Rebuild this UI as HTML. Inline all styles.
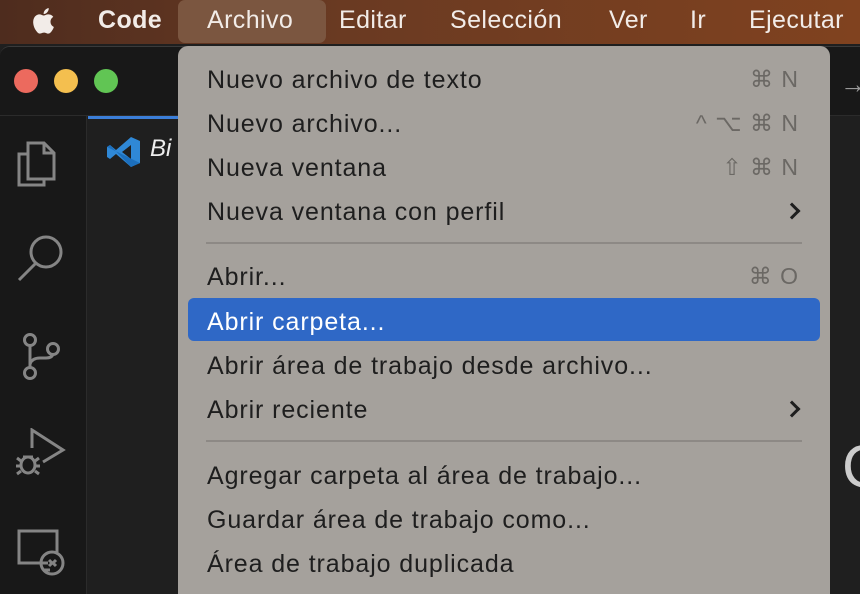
<!DOCTYPE html><html><head><meta charset="utf-8"><style>
*{margin:0;padding:0;box-sizing:border-box}
html,body{width:860px;height:594px;overflow:hidden}
body{position:relative;background:#1f1f1f;font-family:"Liberation Sans",sans-serif}
.mb{position:absolute;left:0;top:0;width:860px;height:44px;background:linear-gradient(90deg,#4e2c1e,#6a3a22 40%,#80421f);color:#f2ece8;font-size:25px;letter-spacing:0.4px}
.mb span{position:absolute;top:6px}
.win{position:absolute;left:0;top:46px;width:860px;height:548px;background:#1f1f1f;border-radius:10px 0 0 0;border-top:1px solid #3a3a3a;overflow:hidden}
.title{position:absolute;left:0;top:0;width:860px;height:69px;background:#181818;border-bottom:1px solid #2b2b2b}
.act{position:absolute;left:0;top:69px;width:87px;height:480px;background:#181818;border-right:1px solid #2b2b2b}
.dot{position:absolute;top:22px;width:24px;height:24px;border-radius:50%}
.menu{position:absolute;left:178px;top:46px;width:652px;height:560px;background:#a5a19c;border-radius:10px;color:#1e1e1e;font-size:25px;letter-spacing:0.9px}
.it{position:absolute;left:29px;line-height:30px;white-space:nowrap}
.sc{position:absolute;right:31px;color:#6b6864;line-height:30px;font-size:23px;letter-spacing:1px}
.sep{position:absolute;left:28px;width:596px;height:2px;background:#8d8985}
.hl{position:absolute;left:10px;top:252px;width:632px;height:43px;background:#2f68c6;border-radius:6px}
.arr{position:absolute;right:32px;width:12px;height:12px;border-right:3px solid #1e1e1e;border-top:3px solid #1e1e1e;transform:rotate(45deg)}
svg{position:absolute}
</style></head><body>
<div class="mb">
<svg style="left:30px;top:6px" width="30" height="30" viewBox="0 0 24 24"><path fill="#f2ece8" d="M16.4 12.6c0-2.6 2.1-3.8 2.2-3.9-1.2-1.8-3.1-2-3.7-2-1.6-.2-3.1.9-3.9.9-.8 0-2-.9-3.4-.9-1.7 0-3.3 1-4.2 2.6-1.8 3.1-.5 7.7 1.3 10.2.9 1.2 1.9 2.6 3.2 2.6 1.3-.1 1.8-.8 3.3-.8 1.6 0 2 .8 3.4.8 1.4 0 2.3-1.3 3.1-2.5 1-1.4 1.4-2.8 1.4-2.9-.1 0-2.7-1-2.7-4.1zM13.9 4.9c.7-.9 1.200-2 1.100-3.200-1 0-2.300.700-3 1.600-.700.800-1.200 2-1.100 3.100 1.100.100 2.300-.600 3-1.500z"/></svg>
<span style="left:98px;font-weight:bold">Code</span>
<div style="position:absolute;left:178px;top:0;width:148px;height:43px;background:#7b5640;border-radius:7px"></div>
<span style="left:207px">Archivo</span>
<span style="left:339px">Editar</span>
<span style="left:450px">Selección</span>
<span style="left:609px">Ver</span>
<span style="left:690px">Ir</span>
<span style="left:749px">Ejecutar</span>
</div>
<div class="win">
<div class="title">
<div class="dot" style="left:14px;background:#ec6a5e"></div>
<div class="dot" style="left:54px;background:#f4bf4f"></div>
<div class="dot" style="left:94px;background:#61c554"></div>
<div style="position:absolute;left:840px;top:22px;color:#999;font-size:26px">→</div>
</div>
<div class="act">
<svg style="left:16px;top:24px" width="46" height="48" viewBox="0 0 46 48" fill="none" stroke="#858585" stroke-width="3"><path d="M12 14H3v31h25v-6"/><path d="M12 3h16l10 10v26H12z"/><path d="M28 3v10h10"/></svg>
<svg style="left:16px;top:117px" width="50" height="50" viewBox="0 0 50 50" fill="none" stroke="#858585" stroke-width="3"><circle cx="30" cy="19" r="15"/><path d="M20 30L3 47"/></svg>
<svg style="left:20px;top:216px" width="40" height="50" viewBox="0 0 40 50" fill="none" stroke="#858585" stroke-width="3"><circle cx="10" cy="8" r="5.5"/><circle cx="10" cy="41" r="5.5"/><circle cx="33" cy="17" r="5.5"/><path d="M10 14v21M10 32q2-6 10-6h6q6 0 7-4"/></svg>
<svg style="left:14px;top:312px" width="52" height="50" viewBox="0 0 52 50" fill="none" stroke="#858585" stroke-width="3"><path d="M18 20V2l31 20-20 12"/><ellipse cx="14" cy="37" rx="7" ry="8"/><path d="M3 30l4 3M25 30l-4 3M2 38h5M21 38h5M3 46l4-3M25 46l-4-3M9 29h10"/></svg>
<svg style="left:16px;top:412px" width="50" height="48" viewBox="0 0 50 48" fill="none" stroke="#858585" stroke-width="3"><path d="M32 35H3V3h38v21M27 42h7"/><circle cx="36" cy="35" r="11"/><path d="M33 32l3 3-3 3M40 32l-3 3 3 3"/></svg>
</div>
<div style="position:absolute;left:88px;top:69px;width:92px;height:3px;background:#3b7ed8"></div>
<div style="position:absolute;left:88px;top:72px;width:92px;height:55px;background:#1f1f1f"></div>
<svg style="left:107px;top:89px" width="34" height="32" viewBox="0 0 34 32"><path fill="#2f88d6" d="M24 1l9 4v22l-9 4L9 18l-6 5-3-2V11l3-2 6 5zM24 9l-9 7 9 7z"/><path fill="#1c6fbd" d="M0 11l3-2 21 22 9-4"/></svg>
<div style="position:absolute;left:150px;top:88px;color:#eee;font-style:italic;font-size:24px">Bi</div>
<div style="position:absolute;left:842px;top:385px;color:#ccc;font-size:60px">C</div>
</div>
<div class="menu">
<div class="it" style="top:19px">Nuevo archivo de texto</div><div class="sc" style="top:18px">⌘ N</div>
<div class="it" style="top:63px">Nuevo archivo...</div><div class="sc" style="top:62px">^ ⌥ ⌘ N</div>
<div class="it" style="top:107px">Nueva ventana</div><div class="sc" style="top:106px">⇧ ⌘ N</div>
<div class="it" style="top:151px">Nueva ventana con perfil</div><div class="arr" style="top:159px"></div>
<div class="sep" style="top:196px"></div>
<div class="it" style="top:216px">Abrir...</div><div class="sc" style="top:215px">⌘ O</div>
<div class="hl"></div>
<div class="it" style="top:261px;color:#fff">Abrir carpeta...</div>
<div class="it" style="top:305px">Abrir área de trabajo desde archivo...</div>
<div class="it" style="top:349px">Abrir reciente</div><div class="arr" style="top:357px"></div>
<div class="sep" style="top:394px"></div>
<div class="it" style="top:415px">Agregar carpeta al área de trabajo...</div>
<div class="it" style="top:459px">Guardar área de trabajo como...</div>
<div class="it" style="top:503px">Área de trabajo duplicada</div>
</div>
</body></html>
